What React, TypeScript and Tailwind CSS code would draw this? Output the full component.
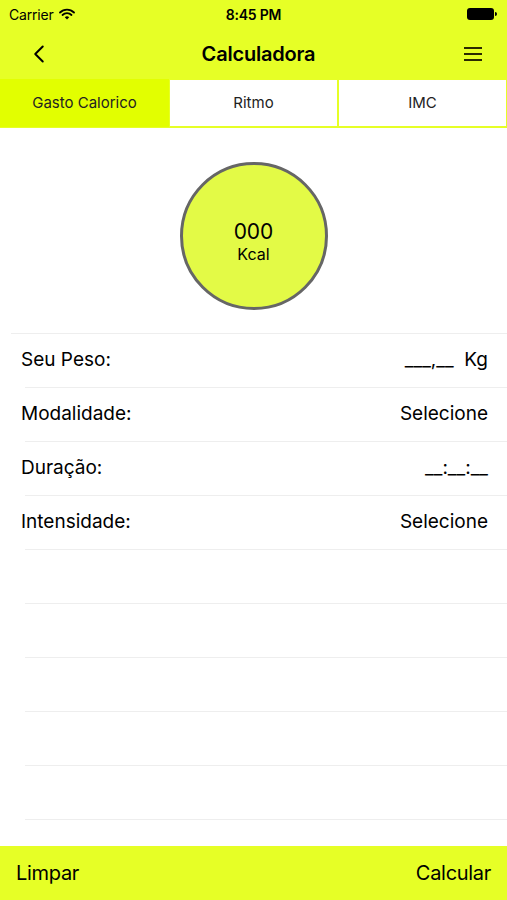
import { ChevronLeft } from "lucide-react"

export default function App() {
  const rows = [
    { label: "Seu Peso:", value: "___,__  Kg" },
    { label: "Modalidade:", value: "Selecione" },
    { label: "Duração:", value: "__:__:__" },
    { label: "Intensidade:", value: "Selecione" },
  ]
  const empty = [0, 1, 2, 3, 4]

  return (
    <div className="flex h-[900px] w-full flex-col bg-white font-['Inter','Liberation_Sans',sans-serif] text-black">
      {/* status bar + nav */}
      <div className="bg-[#e6ff26]">
        <div className="relative flex h-[28px] items-center px-[9px] text-[14px] tracking-[-0.2px]">
          <span className="flex items-center gap-[5px]">
            Carrier
            <svg width="16" height="12" viewBox="0 0 16 12">
              <path d="M1 4.5a10 10 0 0 1 14 0" stroke="#000" strokeWidth="1.8" fill="none" strokeLinecap="round" />
              <path d="M3.5 7a6.5 6.5 0 0 1 9 0" stroke="#000" strokeWidth="1.8" fill="none" strokeLinecap="round" />
              <path d="M8 11.5 L5.8 9.3 a3.2 3.2 0 0 1 4.4 0 Z" fill="#000" />
            </svg>
          </span>
          <span className="absolute left-1/2 -translate-x-1/2 font-semibold">8:45 PM</span>
          <span className="ml-auto flex items-center pr-[1px]">
            <span className="h-[12px] w-[27px] rounded-[3px] bg-black" />
            <span className="ml-[1px] h-[4px] w-[2px] rounded-r-sm bg-black" />
          </span>
        </div>
        <div className="flex h-[51px] items-center justify-between pl-[24px] pr-[24px]">
          <ChevronLeft className="h-[30px] w-[30px]" strokeWidth={1.6} />
          <span className="text-[20px] font-semibold tracking-[-0.2px]">Calculadora</span>
          <svg width="20" height="16" viewBox="0 0 20 16">
            <path d="M1 2h18M1 8h18M1 14h18" stroke="#2a2a00" strokeWidth="2" />
          </svg>
        </div>
      </div>

      {/* tabs */}
      <div className="grid h-[49px] grid-cols-3 border-b border-[#e6ff26] text-[15px]">
        <div className="flex items-center justify-center bg-[#e2ff00] text-[#222]">Gasto Calorico</div>
        <div className="flex items-center justify-center border border-[#e6ff26] text-[#222]">Ritmo</div>
        <div className="flex items-center justify-center border border-[#e6ff26] text-[#222]">IMC</div>
      </div>

      {/* gauge */}
      <div className="flex h-[205px] items-center justify-center pt-[10px]">
        <div className="flex h-[148px] w-[148px] flex-col items-center justify-center rounded-full border-[3px] border-[#666] bg-[#e3fa46] pt-[12px]">
          <span className="text-[21px] leading-[24px]">000</span>
          <span className="text-[16px] leading-[20px]">Kcal</span>
        </div>
      </div>

      {/* form rows */}
      <div className="ml-[11px] border-t border-[#eeeeee]" />
      <div className="flex flex-1 flex-col">
        {rows.map((row) => (
          <div key={row.label} className="flex h-[54px] flex-col">
            <div className="flex flex-1 items-center pl-[21px] pr-[19px] text-[19px]">
              <span>{row.label}</span>
              <span className="ml-auto whitespace-pre">{row.value}</span>
            </div>
            <div className="ml-[25px] border-b border-[#eeeeee]" />
          </div>
        ))}
        {empty.map((i) => (
          <div key={i} className="ml-[25px] h-[54px] border-b border-[#eeeeee]" />
        ))}
      </div>

      {/* bottom bar */}
      <div className="flex h-[54px] items-center justify-between bg-[#e6ff26] px-[16px] text-[20px] tracking-[-0.3px]">
        <span>Limpar</span>
        <span>Calcular</span>
      </div>
    </div>
  )
}
